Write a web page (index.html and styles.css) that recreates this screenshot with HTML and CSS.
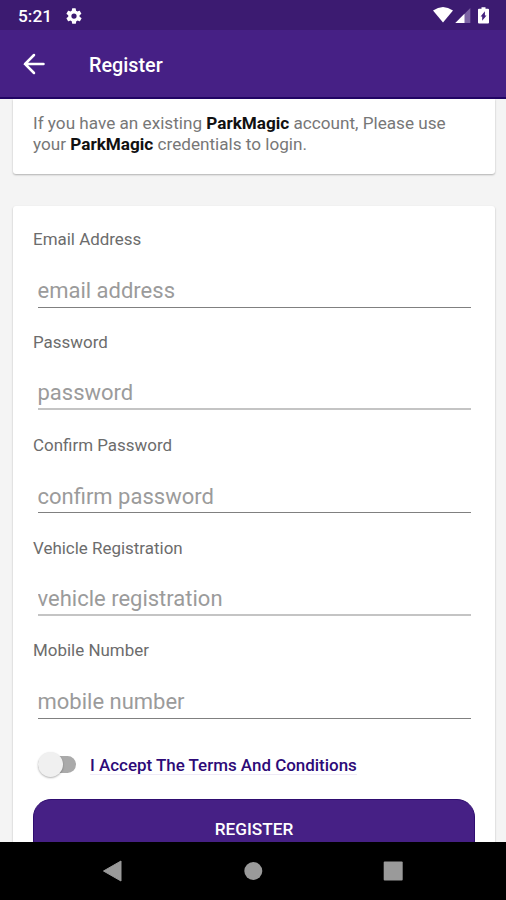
FILE: index.html
```html
<!DOCTYPE html>
<html lang="en">
<head>
<meta charset="utf-8">
<title>Register</title>
<link rel="stylesheet" href="styles.css">
</head>
<body>
<div class="screen">
  <div class="status">
    <span class="time">5:21</span>
    <svg class="gear" width="18" height="18" viewBox="0 0 24 24"><path fill="#fff" d="M19.4 13a7.500 7.500 0 0 0 0-2l2.200-1.650c.2-.15.25-.42.12-.64l-2.100-3.600c-.13-.22-.39-.3-.6-.22l-2.600 1.040a7.700 7.700 0 0 0-1.700-1l-.38-2.720a.5.5 0 0 0-.5-.42H9.900a.5.5 0 0 0-.5.42l-.4 2.720c-.6.25-1.160.58-1.680 1L4.740 4.890c-.23-.08-.48 0-.6.22l-2.100 3.600c-.13.22-.08.49.1.640L4.370 11a7.800 7.800 0 0 0 0 2l-2.230 1.650a.5.5 0 0 0-.1.640l2.100 3.600c.12.22.38.300.6.220l2.600-1.040c.52.4 1.080.73 1.680 1l.4 2.720c.03.240.25.420.5.420h4.200c.25 0 .46-.18.5-.42l.38-2.720c.62-.26 1.180-.6 1.700-1l2.600 1.040c.23.080.48 0 .6-.22l2.100-3.600a.5.5 0 0 0-.12-.64zM12 15.500a3.500 3.500 0 1 1 0-7 3.500 3.500 0 0 1 0 7z"/></svg>
    <svg class="indicators" width="58" height="18" viewBox="0 0 58 18">
      <path fill="#fff" d="M0 3.600Q10-3.400 20 3.600L10 15.500z"/>
      <path fill="#7c64a4" d="M37.300 1v15H22.300z"/>
      <path fill="#fff" d="M31.500 6.800V16h-9.200z"/>
      <path fill="#fff" d="M48.500 .3h4v1.500h2.500q1 0 1 1v12.700q0 1-1 1h-9q-1 0-1-1v-12.700q0-1 1-1h2.500z"/>
      <path fill="#43217d" d="M51.900 4.300v4.200h1.600L49.200 13.700v-4.200h-1.600z"/>
    </svg>
  </div>
  <header class="appbar">
    <svg class="back" width="22" height="22" viewBox="0 0 22 22"><path d="M20.500 11H2M11 2 2 11 11 20" fill="none" stroke="#fff" stroke-width="2.500" stroke-linecap="round"/></svg>
    <h1 class="title">Register</h1>
  </header>
  <main class="content">
    <section class="card notice">
      <p class="notice-text">If you have an existing <b>ParkMagic</b> account, Please use<br>your <b>ParkMagic</b> credentials to login.</p>
    </section>
    <form class="card form">
      <div class="field"><label class="label" for="email">Email Address</label><input class="input" id="email" placeholder="email address"></div>
      <div class="field"><label class="label" for="pass">Password</label><input class="input soft" id="pass" placeholder="password"></div>
      <div class="field"><label class="label" for="confirm">Confirm Password</label><input class="input" id="confirm" placeholder="confirm password"></div>
      <div class="field"><label class="label" for="vehicle">Vehicle Registration</label><input class="input soft" id="vehicle" placeholder="vehicle registration"></div>
      <div class="field"><label class="label" for="mobile">Mobile Number</label><input class="input" id="mobile" placeholder="mobile number"></div>
      <div class="terms"><span class="switch"><span class="thumb"></span></span><span class="terms-text">I Accept The Terms And Conditions</span></div>
      <button class="submit" type="button">REGISTER</button>
    </form>
  </main>
  <nav class="navbar">
    <svg width="20" height="22" viewBox="0 0 20 22"><path fill="#9a9a9a" d="M18 1v20L.5 11z" stroke="#9a9a9a" stroke-linejoin="round"/></svg>
    <svg width="20" height="20" viewBox="0 0 20 20"><circle cx="10.300" cy="10" r="9" fill="#9a9a9a"/></svg>
    <svg width="20" height="20" viewBox="0 0 20 20"><rect x=".7" y=".5" width="19" height="19" rx="1" fill="#9a9a9a"/></svg>
  </nav>
</div>
</body>
</html>
```
FILE: styles.css
```css
* { box-sizing: border-box; }
body { margin: 0; font-family: Roboto, sans-serif; }
.screen { display: flex; flex-direction: column; width: 506px; height: 900px; overflow: hidden; background: #f4f4f4; }
.status { flex: none; display: flex; align-items: center; height: 30px; padding: 2px 15px 0 18px; background: #3c1b71; color: #fff; }
.time { width: 47px; font-size: 17.300px; font-weight: 500; }
.indicators { margin-left: auto; }
.appbar { flex: none; display: flex; align-items: center; height: 69px; padding-left: 23px; background: #462085; border-bottom: 2px solid #210464; color: #fff; }
.title { margin: 5px 0 0 44px; font-size: 19.800px; line-height: 24px; font-weight: 500; }
.content { flex: 1; min-height: 0; overflow: hidden; padding: 0 11px 0 13px; }
.card { background: #fff; border-radius: 3px; box-shadow: 0 1px 2px rgba(0,0,0,.28); }
.notice { height: 75px; margin-bottom: 32px; padding: 14px 20px 0; border-radius: 0 0 3px 3px; }
.notice-text { margin: 0; font-size: 17.150px; line-height: 21px; color: #777; white-space: nowrap; }
.notice-text b { color: #111; }
.form { height: 700px; padding: 23px 20px 0; }
.field { height: 102.850px; }
.label { display: block; font-size: 16.950px; line-height: 20px; color: #6c6c6c; }
.input { display: block; width: 433px; height: 43px; margin: 15.500px 0 0 4.500px; padding: 10px 0 0; border: 0; border-bottom: 1px solid #808080; outline: 0; background: none; font: 22px Roboto, sans-serif; color: #333; }
.input.soft { border-bottom: 2px solid #c4c4c4; }
.input::placeholder { color: #9b9b9b; opacity: 1; }
.terms { display: flex; align-items: center; height: 30px; margin-top: 6px; padding-left: 5px; }
.switch { display: flex; align-items: center; width: 38px; height: 17px; margin: 1px 14px 0 0; border-radius: 9px; background: #aaa; }
.thumb { width: 25px; height: 25px; flex: none; border-radius: 50%; background: #f0f0f0; box-shadow: 0 1px 2px rgba(0,0,0,.3); }
.terms-text { margin-top: 2px; font-size: 16.950px; line-height: 18px; font-weight: 500; color: #2d0a78; border-bottom: 1px solid #eeeaf6; }
.submit { display: block; width: 442px; height: 60px; margin-top: 20px; border: 1px solid #2f0d70; border-radius: 18px; background: #462085; color: #fff; font: 500 17.200px Roboto, sans-serif; }
.navbar { flex: none; display: flex; justify-content: center; align-items: center; gap: 120px; height: 58px; background: #000; }
```
